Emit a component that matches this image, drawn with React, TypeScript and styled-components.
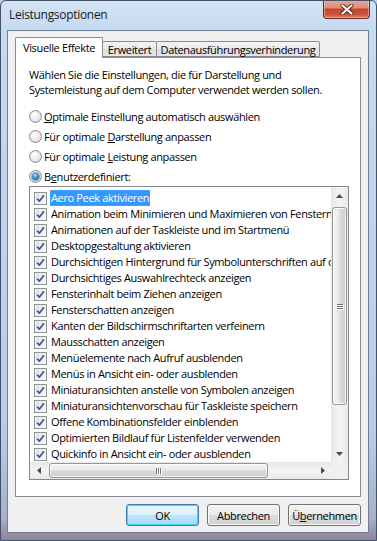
import { createGlobalStyle, styled } from "styled-components";

const GlobalStyle = createGlobalStyle`
  html, body {
    margin: 0;
    padding: 0;
    background: #b9cfe8;
  }
  * {
    box-sizing: border-box;
  }
`;

const uiFont = `"Open Sans", "Noto Sans", sans-serif`;

const Window = styled.div`
  width: 377px;
  height: 541px;
  display: flex;
  flex-direction: column;
  border: 1px solid #42536a;
  border-radius: 6px 6px 0 0;
  padding: 0 7px 7px 6px;
  background: linear-gradient(
    180deg,
    #d3e3f5 0px,
    #c6daf0 28px,
    #bed4ec 45%,
    #b7cde7 80%,
    #a8b0c8 96%,
    #8f8399 100%
  );
  font-family: ${uiFont};
  font-size: 11px;
  letter-spacing: -0.35px;
  color: #000;
  overflow: hidden;
`;

const TitleBar = styled.div`
  height: 29px;
  flex: none;
  display: flex;
  justify-content: space-between;
  align-items: flex-start;
  padding-left: 2px;
  margin-right: -1px;
`;

const Title = styled.span`
  margin-top: 5px;
  font-size: 12px;
  color: #1b1b1b;
  letter-spacing: -0.3px;
`;

const CloseButton = styled.div`
  width: 47px;
  height: 19px;
  margin-top: -1px;
  border: 1px solid #6b2d22;
  border-top: none;
  border-radius: 0 0 4px 4px;
  background: linear-gradient(180deg, #eaa998 0%, #dc8b74 45%, #c2452b 50%, #c9553a 80%, #dc7f63 100%);
  box-shadow: inset 0 0 0 1px rgba(255, 255, 255, 0.35);
  display: flex;
  align-items: center;
  justify-content: center;
`;

const Client = styled.div`
  flex: 1;
  display: flex;
  flex-direction: column;
  background: #f0f0f0;
  border: 1px solid #6e7f95;
  padding: 6px 7px 6px 7px;
`;

const TabStrip = styled.div`
  height: 20px;
  display: flex;
  align-items: flex-end;
  position: relative;
  z-index: 1;
`;

const Tab = styled.div<{ $active?: boolean; $w: number }>`
  width: ${(p) => p.$w}px;
  height: ${(p) => (p.$active ? 21 : 16)}px;
  margin-bottom: ${(p) => (p.$active ? -1 : 0)}px;
  margin-left: ${(p) => (p.$active ? 0 : -1)}px;
  border: 1px solid #898c95;
  border-bottom: ${(p) => (p.$active ? "none" : "1px solid #898c95")};
  border-radius: 2px 2px 0 0;
  background: ${(p) => (p.$active ? "#ffffff" : "linear-gradient(180deg, #f3f3f3 0%, #ebebeb 50%, #dedede 51%, #e5e5e5 100%)")};
  display: flex;
  align-items: center;
  justify-content: center;
  padding-bottom: ${(p) => (p.$active ? 1 : 0)}px;
  font-size: 11px;
  white-space: nowrap;
  position: relative;
  z-index: ${(p) => (p.$active ? 2 : 1)};
`;

const Panel = styled.div`
  height: 440px;
  flex: none;
  background: #ffffff;
  border: 1px solid #898c95;
  padding: 9px 11px 15px 13px;
  display: flex;
  flex-direction: column;
`;

const Intro = styled.p`
  margin: 0;
  line-height: 15px;
  font-size: 11px;
`;

const RadioGroup = styled.div`
  margin-top: 10px;
  display: flex;
  flex-direction: column;
`;

const RadioRow = styled.label`
  height: 19.8px;
  display: flex;
  align-items: center;
  gap: 2px;
  font-size: 11px;
`;

const RadioCircle = styled.span<{ $checked?: boolean }>`
  width: 13px;
  height: 13px;
  border-radius: 50%;
  border: 1px solid #8b8b8b;
  background: radial-gradient(circle at 40% 35%, #ffffff 0%, #ececec 45%, #cfcfcf 100%);
  display: flex;
  align-items: center;
  justify-content: center;
  flex: none;

  &::after {
    content: "";
    width: 7px;
    height: 7px;
    border-radius: 50%;
    display: ${(p) => (p.$checked ? "block" : "none")};
    background: radial-gradient(circle at 45% 35%, #a9e8ff 0%, #2d8fd4 45%, #0b4f8c 100%);
    box-shadow: 0 0 0 1px rgba(20, 60, 110, 0.45);
  }
`;

const ListBox = styled.div`
  height: 294px;
  flex: none;
  border: 1px solid #828790;
  background: #ffffff;
  display: grid;
  grid-template-columns: minmax(0, 1fr) 17px;
  grid-template-rows: minmax(0, 1fr) 17px;
`;

const Items = styled.div`
  overflow: hidden;
  padding-top: 3px;
  display: flex;
  flex-direction: column;
`;

const ItemRow = styled.div`
  height: 16px;
  flex: none;
  display: flex;
  align-items: center;
  padding-left: 4px;
  gap: 3px;
  white-space: nowrap;
  font-size: 11px;
`;

const CheckBox = styled.span`
  width: 13px;
  height: 13px;
  flex: none;
  border: 1px solid #8e8f8f;
  background: linear-gradient(135deg, #d8d8d8 0%, #eeeeee 50%, #ffffff 100%);
  box-shadow: inset 0 0 0 1px #f4f4f4;
  display: flex;
  align-items: center;
  justify-content: center;
`;

const ItemLabel = styled.span<{ $selected?: boolean }>`
  padding: 0 1px;
  height: 16px;
  line-height: 15px;
  background: ${(p) => (p.$selected ? "#3399ff" : "transparent")};
  color: ${(p) => (p.$selected ? "#ffffff" : "#000000")};
  outline: ${(p) => (p.$selected ? "1px dotted #cc8844" : "none")};
  outline-offset: -1px;
`;

const VScroll = styled.div`
  display: flex;
  flex-direction: column;
  background: linear-gradient(90deg, #e6e6e6 0%, #f3f3f3 40%, #f3f3f3 60%, #e9e9e9 100%);
`;

const HScroll = styled.div`
  display: flex;
  background: linear-gradient(180deg, #e6e6e6 0%, #f3f3f3 40%, #f3f3f3 60%, #e9e9e9 100%);
`;

const ArrowBox = styled.div<{ $size: number; $horizontal?: boolean }>`
  width: ${(p) => (p.$horizontal ? p.$size : 17)}px;
  height: ${(p) => (p.$horizontal ? 17 : p.$size)}px;
  flex: none;
  display: flex;
  align-items: center;
  justify-content: center;
`;

const Track = styled.div<{ $horizontal?: boolean }>`
  flex: 1;
  display: flex;
  flex-direction: ${(p) => (p.$horizontal ? "row" : "column")};
  padding: ${(p) => (p.$horizontal ? "0 0 0 2px" : "3px 0 0 0")};
`;

const Thumb = styled.div<{ $horizontal?: boolean; $len: number }>`
  flex: none;
  ${(p) => (p.$horizontal ? `width: ${p.$len}px; height: 15px; margin-top: 1px;` : `height: ${p.$len}px; width: 15px; margin-left: 1px;`)}
  border: 1px solid #979797;
  border-radius: 3px;
  background: ${(p) =>
    p.$horizontal
      ? "linear-gradient(180deg, #f6f6f6 0%, #e9e9e9 45%, #dadada 55%, #cfcfcf 100%)"
      : "linear-gradient(90deg, #f6f6f6 0%, #e9e9e9 45%, #dadada 55%, #cfcfcf 100%)"};
  box-shadow: inset 0 0 0 1px rgba(255, 255, 255, 0.7);
  display: flex;
  align-items: center;
  justify-content: center;
`;

const Grip = styled.span<{ $horizontal?: boolean }>`
  display: flex;
  flex-direction: ${(p) => (p.$horizontal ? "row" : "column")};
  gap: 1px;

  & > i {
    display: block;
    background: #777;
    box-shadow: 1px 1px 0 #fff;
    ${(p) => (p.$horizontal ? "width: 1px; height: 6px;" : "width: 6px; height: 1px;")}
  }
`;

const Corner = styled.div`
  background: #f0f0f0;
`;

const ButtonRow = styled.div`
  margin-top: 7px;
  display: flex;
  justify-content: flex-end;
  gap: 8px;
`;

const Button = styled.button<{ $default?: boolean }>`
  width: 73px;
  height: 22px;
  padding: 0;
  font-family: ${uiFont};
  font-size: 11px;
  letter-spacing: -0.35px;
  color: #000;
  border-radius: 3px;
  border: 1px solid ${(p) => (p.$default ? "#3c7fb1" : "#707070")};
  background: ${(p) =>
    p.$default
      ? "linear-gradient(180deg, #eaf6fd 0%, #d9f0fc 50%, #bee6fd 51%, #a7d9f5 100%)"
      : "linear-gradient(180deg, #f2f2f2 0%, #ebebeb 50%, #dddddd 51%, #cfcfcf 100%)"};
  box-shadow: inset 0 0 0 1px ${(p) => (p.$default ? "#48d0f7" : "#fbfbfb")};
`;

const items = [
  "Aero Peek aktivieren",
  "Animation beim Minimieren und Maximieren von Fenstern",
  "Animationen auf der Taskleiste und im Startmenü",
  "Desktopgestaltung aktivieren",
  "Durchsichtigen Hintergrund für Symbolunterschriften auf dem Desktop",
  "Durchsichtiges Auswahlrechteck anzeigen",
  "Fensterinhalt beim Ziehen anzeigen",
  "Fensterschatten anzeigen",
  "Kanten der Bildschirmschriftarten verfeinern",
  "Mausschatten anzeigen",
  "Menüelemente nach Aufruf ausblenden",
  "Menüs in Ansicht ein- oder ausblenden",
  "Miniaturansichten anstelle von Symbolen anzeigen",
  "Miniaturansichtenvorschau für Taskleiste speichern",
  "Offene Kombinationsfelder einblenden",
  "Optimierten Bildlauf für Listenfelder verwenden",
  "Quickinfo in Ansicht ein- oder ausblenden",
];

function Check() {
  return (
    <svg width="9" height="9" viewBox="0 0 9 9">
      <path d="M1 4.6 L3.4 7.2 L8 1.2" fill="none" stroke="#3b5a9a" strokeWidth="1.8" strokeLinejoin="round" />
    </svg>
  );
}

function Arrow({ dir }: { dir: "up" | "down" | "left" | "right" }) {
  const pts = {
    up: "0,4 3.5,0 7,4",
    down: "0,0 7,0 3.5,4",
    left: "4,0 4,7 0,3.5",
    right: "0,0 4,3.5 0,7",
  }[dir];
  const horiz = dir === "left" || dir === "right";
  return (
    <svg width={horiz ? 4 : 7} height={horiz ? 7 : 4} viewBox={horiz ? "0 0 4 7" : "0 0 7 4"}>
      <polygon points={pts} fill="#4a4a4a" />
    </svg>
  );
}

export default function App() {
  return (
    <>
      <GlobalStyle />
      <Window>
        <TitleBar>
          <Title>Leistungsoptionen</Title>
          <CloseButton>
            <svg width="14" height="11" viewBox="0 0 14 11">
              <path d="M2.5 1.5 L11.5 9.5 M11.5 1.5 L2.5 9.5" stroke="#5a2418" strokeWidth="4" strokeLinecap="round" />
              <path d="M2.5 1.5 L11.5 9.5 M11.5 1.5 L2.5 9.5" stroke="#ffffff" strokeWidth="2.2" strokeLinecap="round" />
            </svg>
          </CloseButton>
        </TitleBar>
        <Client>
          <TabStrip>
            <Tab $active $w={88}>Visuelle Effekte</Tab>
            <Tab $w={55}>Erweitert</Tab>
            <Tab $w={164}>Datenausführungsverhinderung</Tab>
          </TabStrip>
          <Panel>
            <Intro>
              Wählen Sie die Einstellungen, die für Darstellung und
              <br />
              Systemleistung auf dem Computer verwendet werden sollen.
            </Intro>
            <RadioGroup>
              <RadioRow>
                <RadioCircle />
                <span><u>O</u>ptimale Einstellung automatisch auswählen</span>
              </RadioRow>
              <RadioRow>
                <RadioCircle />
                <span>Für optimale <u>D</u>arstellung anpassen</span>
              </RadioRow>
              <RadioRow>
                <RadioCircle />
                <span>Für optimale <u>L</u>eistung anpassen</span>
              </RadioRow>
              <RadioRow>
                <RadioCircle $checked />
                <span>B<u>e</u>nutzerdefiniert:</span>
              </RadioRow>
            </RadioGroup>
            <ListBox>
              <Items>
                {items.map((t, i) => (
                  <ItemRow key={t}>
                    <CheckBox>
                      <Check />
                    </CheckBox>
                    <ItemLabel $selected={i === 0}>{t}</ItemLabel>
                  </ItemRow>
                ))}
              </Items>
              <VScroll>
                <ArrowBox $size={17}>
                  <Arrow dir="up" />
                </ArrowBox>
                <Track>
                  <Thumb $len={198}>
                    <Grip>
                      <i />
                      <i />
                      <i />
                    </Grip>
                  </Thumb>
                </Track>
                <ArrowBox $size={17}>
                  <Arrow dir="down" />
                </ArrowBox>
              </VScroll>
              <HScroll>
                <ArrowBox $size={17} $horizontal>
                  <Arrow dir="left" />
                </ArrowBox>
                <Track $horizontal>
                  <Thumb $horizontal $len={219}>
                    <Grip $horizontal>
                      <i />
                      <i />
                      <i />
                    </Grip>
                  </Thumb>
                </Track>
                <ArrowBox $size={17} $horizontal>
                  <Arrow dir="right" />
                </ArrowBox>
              </HScroll>
              <Corner />
            </ListBox>
          </Panel>
          <ButtonRow>
            <Button $default>OK</Button>
            <Button>Abbrechen</Button>
            <Button>
              Ü<u>b</u>ernehmen
            </Button>
          </ButtonRow>
        </Client>
      </Window>
    </>
  );
}
